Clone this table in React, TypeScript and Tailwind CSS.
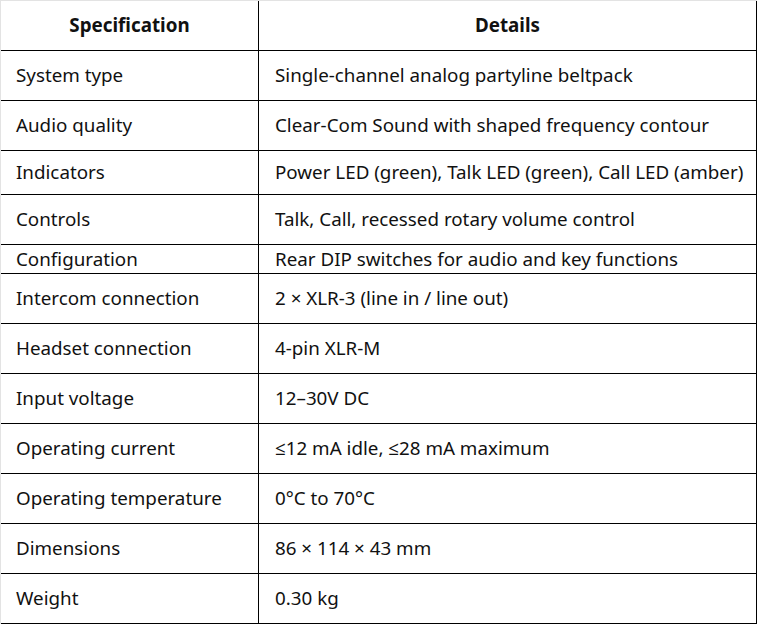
import React from "react";

const rows: { k: string; v: string; h: string }[] = [
  { k: "System type", v: "Single-channel analog partyline beltpack", h: "h-[50px]" },
  { k: "Audio quality", v: "Clear-Com Sound with shaped frequency contour", h: "h-[50px]" },
  { k: "Indicators", v: "Power LED (green), Talk LED (green), Call LED (amber)", h: "h-[44px]" },
  { k: "Controls", v: "Talk, Call, recessed rotary volume control", h: "h-[50px]" },
  { k: "Configuration", v: "Rear DIP switches for audio and key functions", h: "h-[29px]" },
  { k: "Intercom connection", v: "2 × XLR-3 (line in / line out)", h: "h-[50px]" },
  { k: "Headset connection", v: "4-pin XLR-M", h: "h-[50px]" },
  { k: "Input voltage", v: "12–30V DC", h: "h-[50px]" },
  { k: "Operating current", v: "≤12 mA idle, ≤28 mA maximum", h: "h-[50px]" },
  { k: "Operating temperature", v: "0°C to 70°C", h: "h-[50px]" },
  { k: "Dimensions", v: "86 × 114 × 43 mm", h: "h-[50px]" },
  { k: "Weight", v: "0.30 kg", h: "h-[50px]" },
];

export default function App() {
  return (
    <div
      className="w-[757px] h-[624px] bg-white border-t border-l border-[#e3e3e3] text-[#111] text-[18.8px] leading-none"
      style={{ fontFamily: '"Noto Sans", "Open Sans", sans-serif' }}
    >
      <div className="flex flex-col border-r border-black h-full">
        <div className="flex h-[50px] border-b border-black font-bold">
          <div className="w-[258px] border-r border-black flex items-center justify-center">
            Specification
          </div>
          <div className="flex-1 flex items-center justify-center">Details</div>
        </div>
        {rows.map((r) => (
          <div key={r.k} className={`flex ${r.h} border-b border-black`}>
            <div className="w-[258px] border-r border-black flex items-center pl-[15px]">
              {r.k}
            </div>
            <div className="flex-1 flex items-center pl-[16px] whitespace-nowrap">{r.v}</div>
          </div>
        ))}
      </div>
    </div>
  );
}
